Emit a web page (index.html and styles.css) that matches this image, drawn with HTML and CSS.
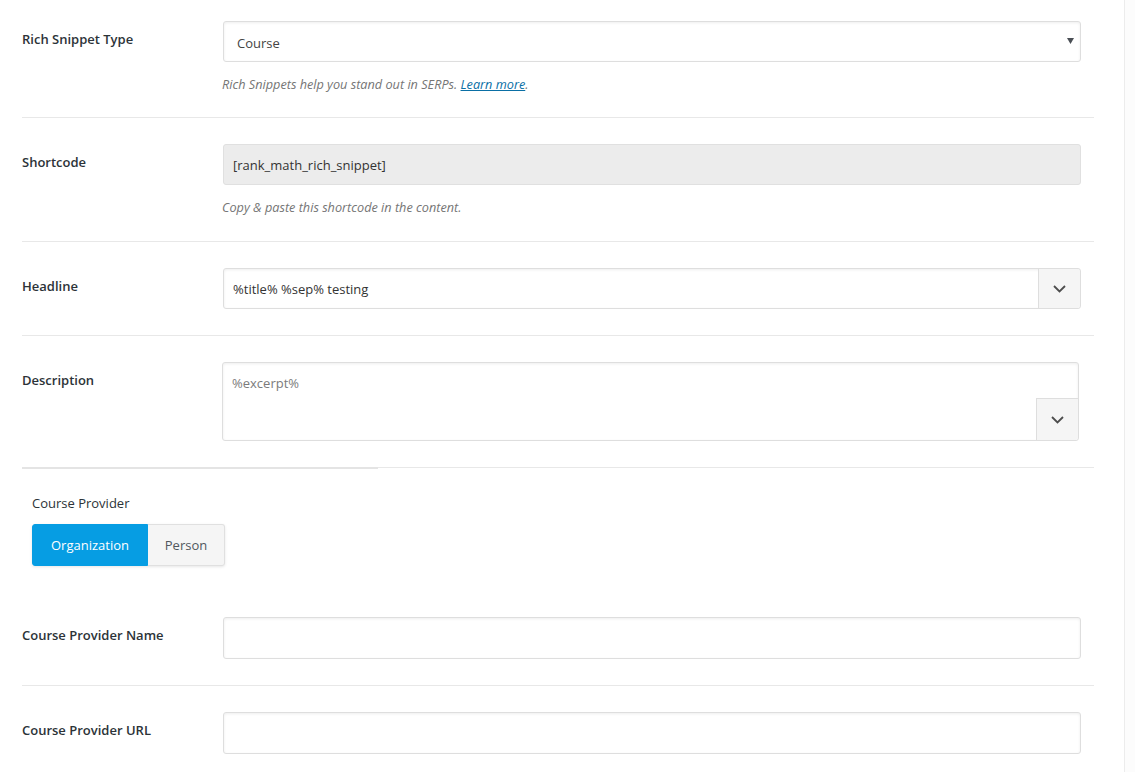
FILE: index.html
```html
<!DOCTYPE html>
<html>
<head>
<meta charset="utf-8">
<link rel="stylesheet" href="styles.css">
</head>
<body>
<div class="page">
  <div class="panel">
    <div class="row row-first has-desc">
      <div class="lbl">Rich Snippet Type</div>
      <div class="field">
        <div class="input select">
          <span class="val">Course</span>
          <svg class="caret" width="7" height="6" viewBox="0 0 7 6"><path d="M0 0H7L3.5 6Z" fill="#4a4f55"/></svg>
        </div>
        <p class="desc">Rich Snippets help you stand out in SERPs. <a href="#">Learn more</a>.</p>
      </div>
    </div>
    <div class="row has-desc second">
      <div class="lbl">Shortcode</div>
      <div class="field">
        <div class="input readonly"><span class="val dark">[rank_math_rich_snippet]</span></div>
        <p class="desc">Copy &amp; paste this shortcode in the content.</p>
      </div>
    </div>
    <div class="row">
      <div class="lbl">Headline</div>
      <div class="field">
        <div class="input combo">
          <span class="val dark">%title% %sep% testing</span>
          <span class="drop"><svg width="13" height="8" viewBox="0 0 13 8"><path d="M1 1L6.5 6.5L12 1" fill="none" stroke="#4d4d4d" stroke-width="1.8"/></svg></span>
        </div>
      </div>
    </div>
    <div class="row">
      <div class="lbl">Description</div>
      <div class="field">
        <div class="input area">
          <span class="val muted">%excerpt%</span>
          <span class="drop drop-area"><svg width="13" height="8" viewBox="0 0 13 8"><path d="M1 1L6.5 6.5L12 1" fill="none" stroke="#4d4d4d" stroke-width="1.8"/></svg></span>
        </div>
      </div>
    </div>
    <div class="group">
      <div class="group-lbl">Course Provider</div>
      <div class="toggle">
        <span class="tbtn active">Organization</span><span class="tbtn">Person</span>
      </div>
    </div>
    <div class="row">
      <div class="lbl">Course Provider Name</div>
      <div class="field"><div class="input tall"></div></div>
    </div>
    <div class="row row-last">
      <div class="lbl">Course Provider URL</div>
      <div class="field"><div class="input tall"></div></div>
    </div>
  </div>
  <div class="gutter"></div>
  <div class="rail"></div>
</div>
</body>
</html>
```

FILE: styles.css
```css
html, body {
  margin: 0;
  padding: 0;
  background: #fff;
}
body {
  font-family: "Open Sans", "Noto Sans", sans-serif;
  color: #32373c;
  font-size: 13px;
}
.page {
  display: flex;
  height: 772px;
  overflow: hidden;
}
.panel {
  width: 1072px;
  margin-left: 22px;
  flex: none;
}
.gutter {
  width: 30px;
  flex: none;
}
.rail {
  flex: 1;
  border-left: 1px solid #ececec;
  background: #fcfcfc;
}
.row {
  display: flex;
  padding: 26px 13px 26px 0;
  border-bottom: 1px solid #e8e8e8;
}
.row.has-desc {
  padding-bottom: 24px;
}
.row.has-desc.second {
  padding-bottom: 25px;
}
.row-first {
  padding-top: 21px;
}
.row-last {
  border-bottom: none;
}
.lbl {
  width: 201px;
  flex: none;
  font-weight: 600;
  font-size: 13px;
  color: #2c3338;
  padding-top: 9px;
  line-height: 18px;
}
.field {
  flex: 1;
}
.input {
  box-sizing: border-box;
  height: 41px;
  border: 1px solid #dedede;
  border-radius: 3px;
  background: #fff;
  box-shadow: inset 0 1px 3px rgba(0, 0, 0, 0.07);
  display: flex;
  align-items: center;
  font-size: 13px;
  color: #444;
}
.input.tall {
  height: 42px;
}
.val {
  padding-left: 13px;
  flex: 1;
}
.val.dark {
  padding-left: 9px;
  color: #333;
}
.val.muted {
  color: #7b7b7b;
  padding-left: 9px;
}
.select .val {
  margin-top: 2px;
}
.caret {
  margin-right: 6px;
  margin-top: -1px;
}
.readonly {
  background: #ececec;
  box-shadow: none;
  border-color: #e0e0e0;
}
.combo {
  overflow: hidden;
}
.drop {
  width: 42px;
  align-self: stretch;
  box-sizing: border-box;
  border-left: 1px solid #dedede;
  background: #f5f5f5;
  display: flex;
  align-items: center;
  justify-content: center;
  border-radius: 0 3px 3px 0;
}
.area {
  height: 79px;
  align-items: stretch;
  overflow: hidden;
  width: calc(100% - 1px);
  margin-left: -1px;
}
.area .val {
  padding-top: 11px;
  line-height: 18px;
}
.drop-area {
  align-self: flex-end;
  height: 42px;
  border-top: 1px solid #dedede;
  border-radius: 0 0 3px 0;
}
.desc {
  margin: 13px 0 0 -1px;
  font-style: italic;
  font-size: 12.7px;
  color: #757575;
  line-height: 18px;
}
.desc a {
  color: #0a6fa5;
  text-decoration: underline;
}
.group {
  padding: 27px 0 25px 10px;
  background: linear-gradient(#e4e4e4, #e4e4e4) no-repeat 0 0 / 356px 2px;
  margin-top: -1px;
}
.group-lbl {
  font-size: 13px;
  color: #2c3338;
  line-height: 18px;
  font-weight: 500;
}
.toggle {
  display: inline-flex;
  margin-top: 12px;
  box-shadow: 0 1px 3px rgba(0, 0, 0, 0.1);
  border-radius: 3px;
}
.tbtn {
  box-sizing: border-box;
  height: 42px;
  display: flex;
  align-items: center;
  justify-content: center;
  font-size: 13px;
  background: #f5f5f5;
  color: #50575e;
  border: 1px solid #e0e0e0;
  border-left: none;
  width: 77px;
  border-radius: 0 3px 3px 0;
}
.tbtn.active {
  width: 116px;
  background: #069de3;
  color: #fff;
  border: 1px solid #069de3;
  border-radius: 3px 0 0 3px;
  font-weight: 500;
}
```
